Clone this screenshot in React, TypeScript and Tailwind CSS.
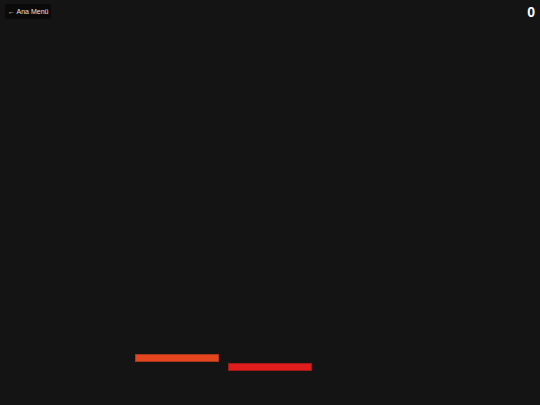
import React from "react";

export default function App() {
  return (
    <div className="relative w-[540px] h-[405px] overflow-hidden bg-[#141414]" style={{ fontFamily: '"Liberation Sans", Arial, sans-serif' }}>
      <div className="flex items-start justify-between pl-[5px] pr-[5px] pt-[4px]">
        <button className="h-[15px] px-[3px] bg-[#0a0a0a] text-[#e5e5e5] text-[7px] leading-[15px] rounded-[2px] whitespace-nowrap">
          ← Ana Menü
        </button>
        <div className="text-white font-bold text-[14px] leading-none pt-[1px]">0</div>
      </div>
      <div className="absolute left-[135px] top-[354px] w-[84px] h-[8px] bg-[#e5461f] border border-[#a8381c]" />
      <div className="absolute left-[228px] top-[363px] w-[84px] h-[8px] bg-[#e01d1d] border border-[#a01818]" />
    </div>
  );
}
